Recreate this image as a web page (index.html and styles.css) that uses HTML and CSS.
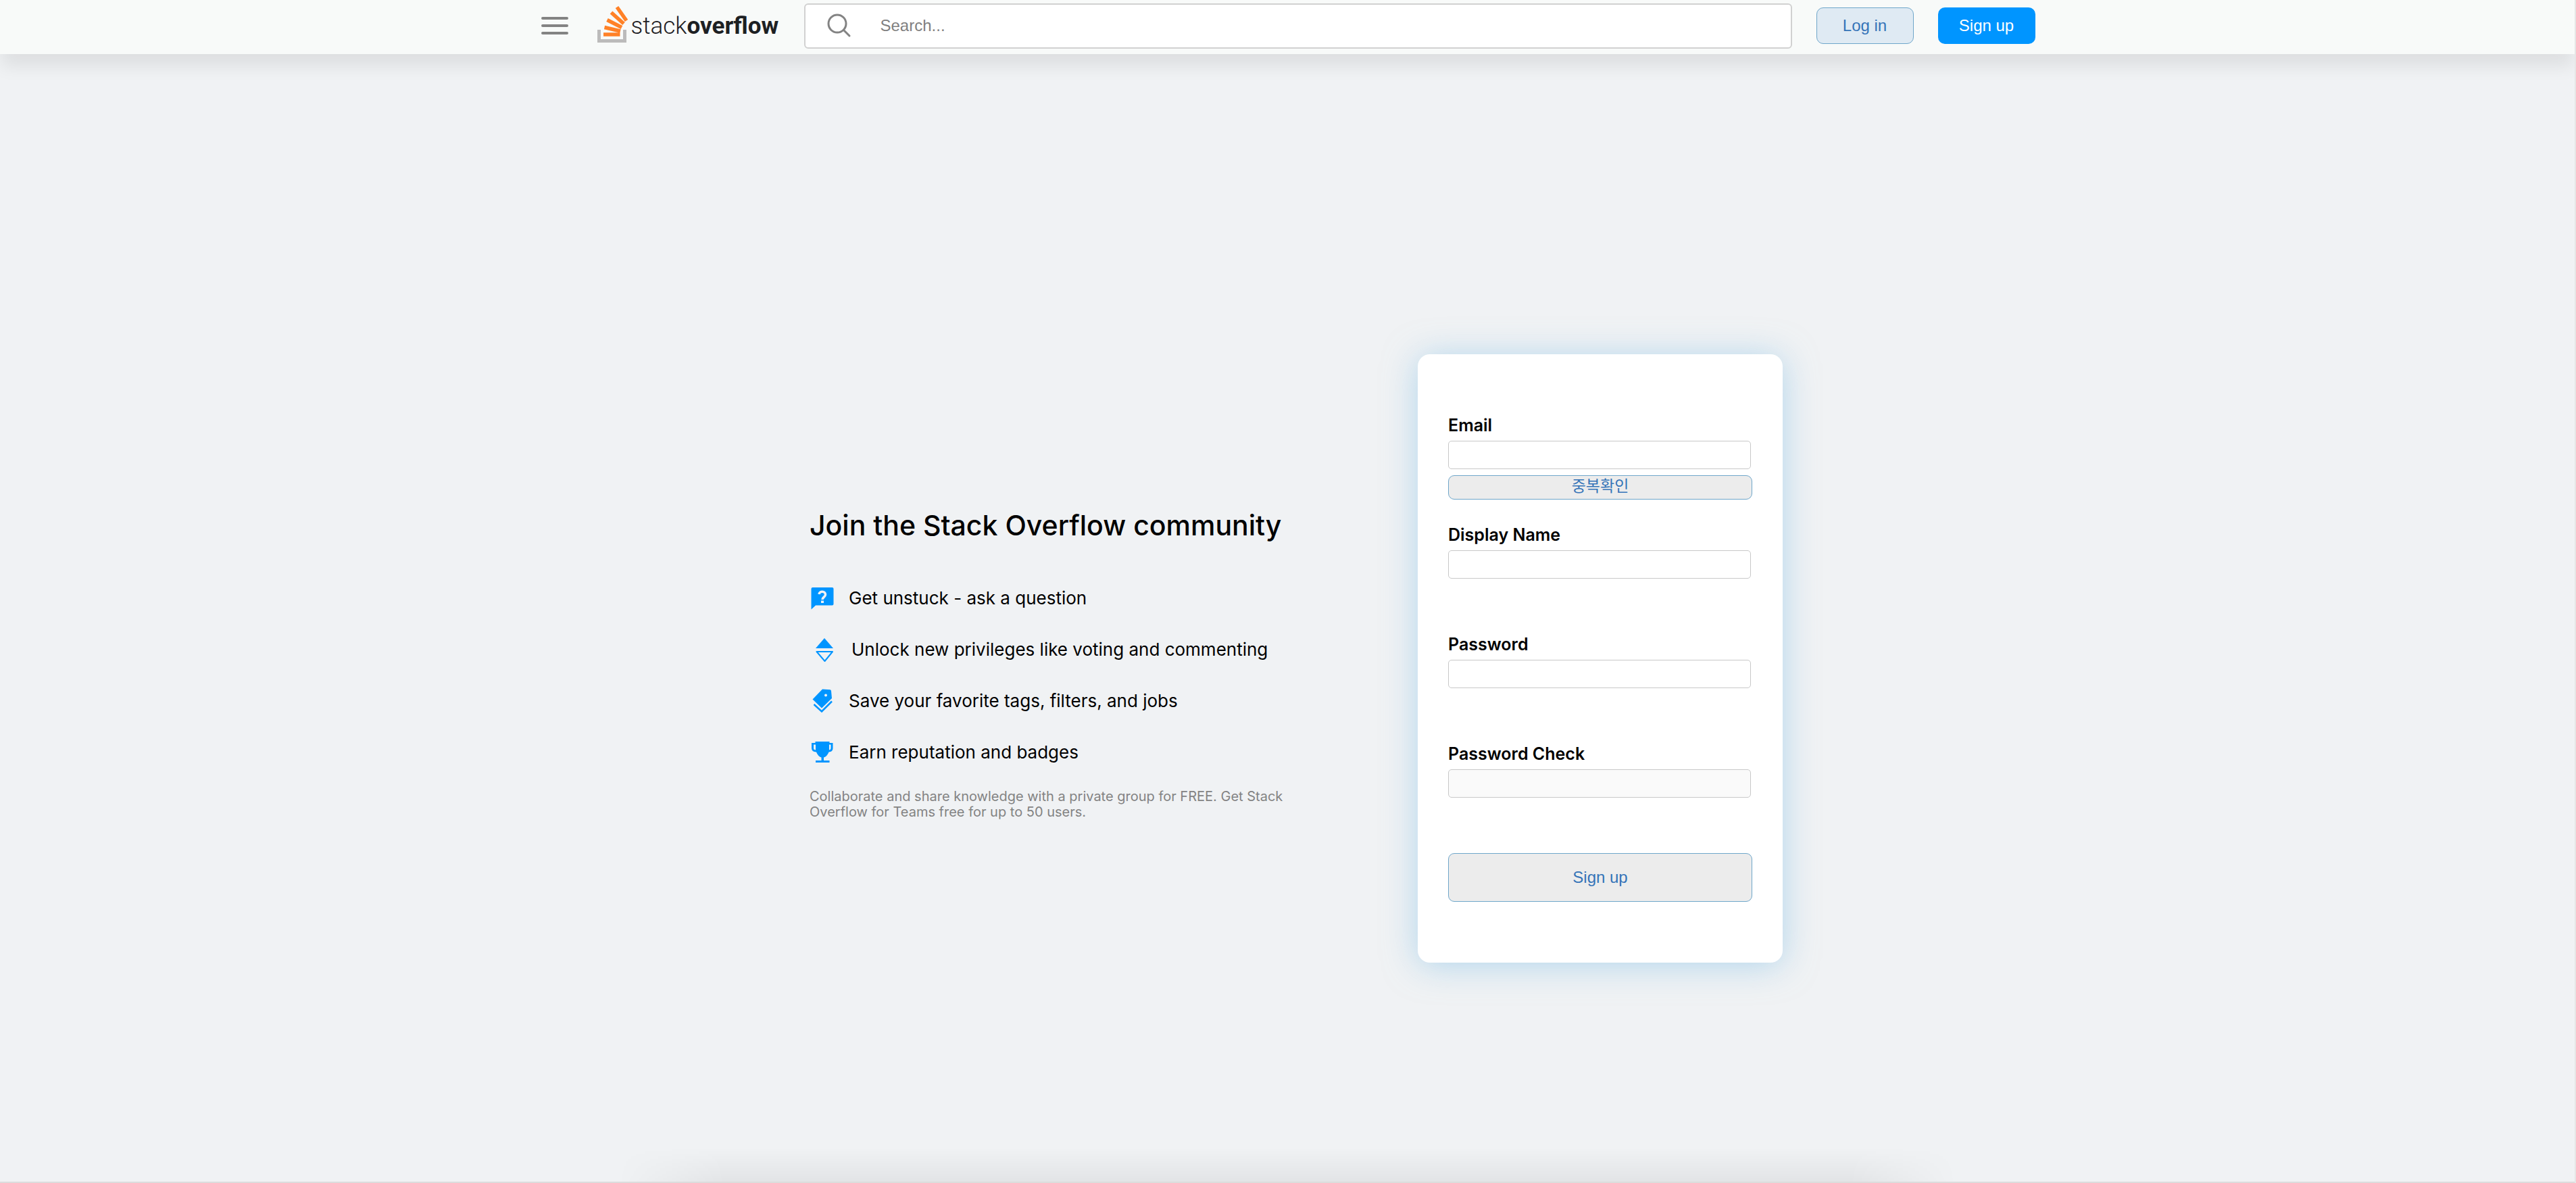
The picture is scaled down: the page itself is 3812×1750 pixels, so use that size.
FILE: index.html
```html
<!DOCTYPE html>
<html lang="en">
<head>
<meta charset="utf-8">
<title>Sign up - Stack Overflow</title>
<link rel="stylesheet" href="styles.css">
</head>
<body>
<header class="topbar">
  <button class="menu" type="button" aria-label="Menu"><span class="menu-bar"></span><span class="menu-bar"></span><span class="menu-bar"></span></button>
  <a class="logo" href="#" aria-label="Stack Overflow">
    <svg class="logo-mark" viewBox="0 0 46 56" width="46" height="56">
      <path fill="none" stroke="#bcbbbb" stroke-width="5" d="M2.500 36v16.500h38V36"/>
      <g stroke="#ff8127" stroke-width="5.500"><path d="M9 43h24.500M10.500 32.500l23.500 5.500M14.500 21.500l21.500 11M20.500 10.500l18.500 16.500M29 2.500l14 20"/></g>
    </svg>
    <span class="logo-text">stack<b>overflow</b></span>
  </a>
  <label class="search">
    <svg viewBox="0 0 36 36" width="36" height="36" fill="none" stroke="#838383" stroke-width="3" stroke-linecap="round"><circle cx="15" cy="15" r="13"/><path d="M24.500 24.500L33 33"/></svg>
    <input class="search-input" type="search" placeholder="Search..." aria-label="Search">
  </label>
  <button class="btn btn-login" type="button">Log in</button>
  <button class="btn btn-signup" type="button">Sign up</button>
</header>
<main class="page">
  <section class="intro">
    <h1 class="title">Join the Stack Overflow community</h1>
    <ul class="features">
      <li class="feature"><svg class="icon" viewBox="0 0 36 36" width="36" height="36"><path fill="#0095ff" d="M4.500 2h29q2 0 2 2v22.500q0 2-2 2H9L2.500 34.500V4q0-2 2-2z"/><path fill="none" stroke="#f0f2f4" stroke-width="3.500" d="M14 12c.5-5 9.500-5 9.500.5 0 4-4.500 3.500-4.500 7.500"/><path fill="#f0f2f4" d="M17 21.500h4V25h-4z"/></svg>Get unstuck - ask a question</li>
      <li class="feature feature-vote"><svg class="icon" viewBox="0 0 36 36" width="36" height="36"><path fill="#0095ff" d="M18 1l13 15H5z"/><path fill="none" stroke="#0095ff" stroke-width="2" stroke-linejoin="round" d="M6.500 21h23.500L18.500 35z"/></svg>Unlock new privileges like voting and commenting</li>
      <li class="feature"><svg class="icon" viewBox="0 0 36 36" width="36" height="36"><path fill="#0095ff" fill-rule="evenodd" d="M19 .5l11.500.7q1.500.3 1.500 2L33 14 18 28.500 4.500 15.500zM24 7.500a2 2 0 1 0 0 4 2 2 0 0 0 0-4z"/><path fill="none" stroke="#0095ff" stroke-width="2.500" d="M6.500 23L18 33.500 33 18.500"/></svg>Save your favorite tags, filters, and jobs</li>
      <li class="feature"><svg class="icon" viewBox="0 0 36 36" width="36" height="36"><path fill="#0095ff" fill-rule="evenodd" d="M8.500 2h21v2h5v8q0 5-6 5.500Q26 24 21 25.500V30h8.500v3H9v-3h8.500v-4.500q-5-1.500-7.500-8Q3 17 3 12V4h5.500zM6 6.500V12q0 2 3 2.500v-8zm23 0v8q2.500-.5 2.500-2.500V6.500z"/></svg>Earn reputation and badges</li>
    </ul>
    <p class="note">Collaborate and share knowledge with a private group for FREE. Get Stack Overflow for Teams free for up to 50 users.</p>
  </section>
  <form class="card">
    <div class="field"><label class="label" for="email">Email</label><input class="input" id="email" type="email"><button class="btn-check" type="button">중복확인</button></div>
    <div class="field"><label class="label" for="name">Display Name</label><input class="input" id="name" type="text"></div>
    <div class="field"><label class="label" for="password">Password</label><input class="input" id="password" type="password"></div>
    <div class="field"><label class="label" for="check">Password Check</label><input class="input" id="check" type="password" disabled></div>
    <button class="btn-submit" type="button">Sign up</button>
  </form>
</main>
<footer class="footer"></footer>
</body>
</html>
```
FILE: styles.css
```css
* { box-sizing: border-box; }

body {
  margin: 0;
  min-height: 100vh;
  display: flex;
  flex-direction: column;
  overflow-x: hidden;
  background: #f0f2f4;
  color: #000;
  font-family: Inter, "Noto Sans CJK KR", sans-serif;
  border-right: 2px solid #e6e6e6;
}

button, input { font-family: "Liberation Sans", "Noto Sans CJK KR", sans-serif; font-size: 24px; }

.topbar {
  display: flex;
  justify-content: center;
  align-items: center;
  height: 80px;
  padding: 0 0 4px 2px;
  background: #f8faf9;
  box-shadow: 0 20px 26px -2px rgba(0, 0, 0, 0.08);
}

.menu {
  display: flex;
  flex-direction: column;
  gap: 7px;
  width: 40px;
  margin-right: 43px;
  padding: 0;
  border: 0;
  background: none;
}
.menu-bar { height: 4px; border-radius: 2px; background: #838383; }

.logo {
  display: flex;
  align-items: center;
  gap: 4px;
  width: 270px;
  margin-right: 36px;
  color: #1d2023;
  text-decoration: none;
}
.logo-mark { flex: none; margin-bottom: 4px; }
.logo-text { font-family: Roboto, sans-serif; font-weight: 300; font-size: 35px; line-height: 40px; padding-top: 2px; }
.logo-text b { font-weight: 700; }

.search {
  display: flex;
  align-items: center;
  flex: 0 1 1462px;
  height: 67px;
  margin-right: 36px;
  padding-left: 32px;
  gap: 43px;
  border: 2px solid #d1d1d1;
  border-radius: 6px;
  background: #fff;
}
.search svg { flex: none; }
.search-input { flex: 1; min-width: 0; padding: 0; border: 0; outline: 0; background: none; }
.search-input::placeholder { color: #808080; }

.btn { width: 144px; height: 54px; padding: 0; border-radius: 10px; }
.btn-login { margin-right: 36px; border: 1px solid #6ea6ca; background: #dfeaf3; color: #3574b8; }
.btn-signup { border: 0; background: #0095ff; color: #fff; }

.page {
  position: relative;
  flex: 1;
  display: flex;
  justify-content: center;
  align-items: center;
  padding: 120px 0 0 26px;
}

/* soft shade rising from the footer */
.page::after {
  content: "";
  position: absolute;
  right: 24%;
  bottom: 0;
  left: 24%;
  height: 50px;
  background: linear-gradient(to top, rgba(0, 0, 0, 0.055), transparent);
  mask-image: linear-gradient(to right, transparent, #000 160px, #000 calc(100% - 160px), transparent);
  pointer-events: none;
}

.intro { width: 720px; margin-right: 180px; padding-top: 14px; }
.title { margin: 0 0 62px; font-size: 41px; line-height: 56px; font-weight: 500; }
.features { display: flex; flex-direction: column; gap: 40px; margin: 0 0 36px; padding: 0; list-style: none; }
.feature { display: flex; align-items: center; gap: 22px; font-size: 26px; line-height: 36px; }
.feature-vote { padding-left: 4px; }
.icon { flex: none; }
.note { margin: 0; color: #838383; font-size: 20px; line-height: 23px; }

.card {
  width: 540px;
  min-height: 900px;
  padding: 90px 45px;
  border-radius: 18px;
  background: #fff;
  box-shadow: 0 4px 50px rgba(125, 190, 230, 0.55);
}
.field { display: flex; flex-direction: column; min-height: 162px; }
.label { margin-bottom: 8px; font-size: 25px; line-height: 30px; font-weight: 600; }
.input { width: 448px; max-width: 100%; height: 42px; padding: 0 8px; border: 1px solid #c8c8c8; border-radius: 5px; background: #fff; }
.input:disabled { background: #fafafa; }
.btn-check, .btn-submit { width: 100%; padding: 0; border: 1px solid #6ea6ca; border-radius: 9px; background: #ececec; color: #3574b8; }
.btn-check { height: 36px; margin-top: 9px; padding-bottom: 4px; font-size: 23px; line-height: 30px; }
.btn-submit { height: 72px; }

.footer { height: 2px; background: #dcdcdc; }
```
